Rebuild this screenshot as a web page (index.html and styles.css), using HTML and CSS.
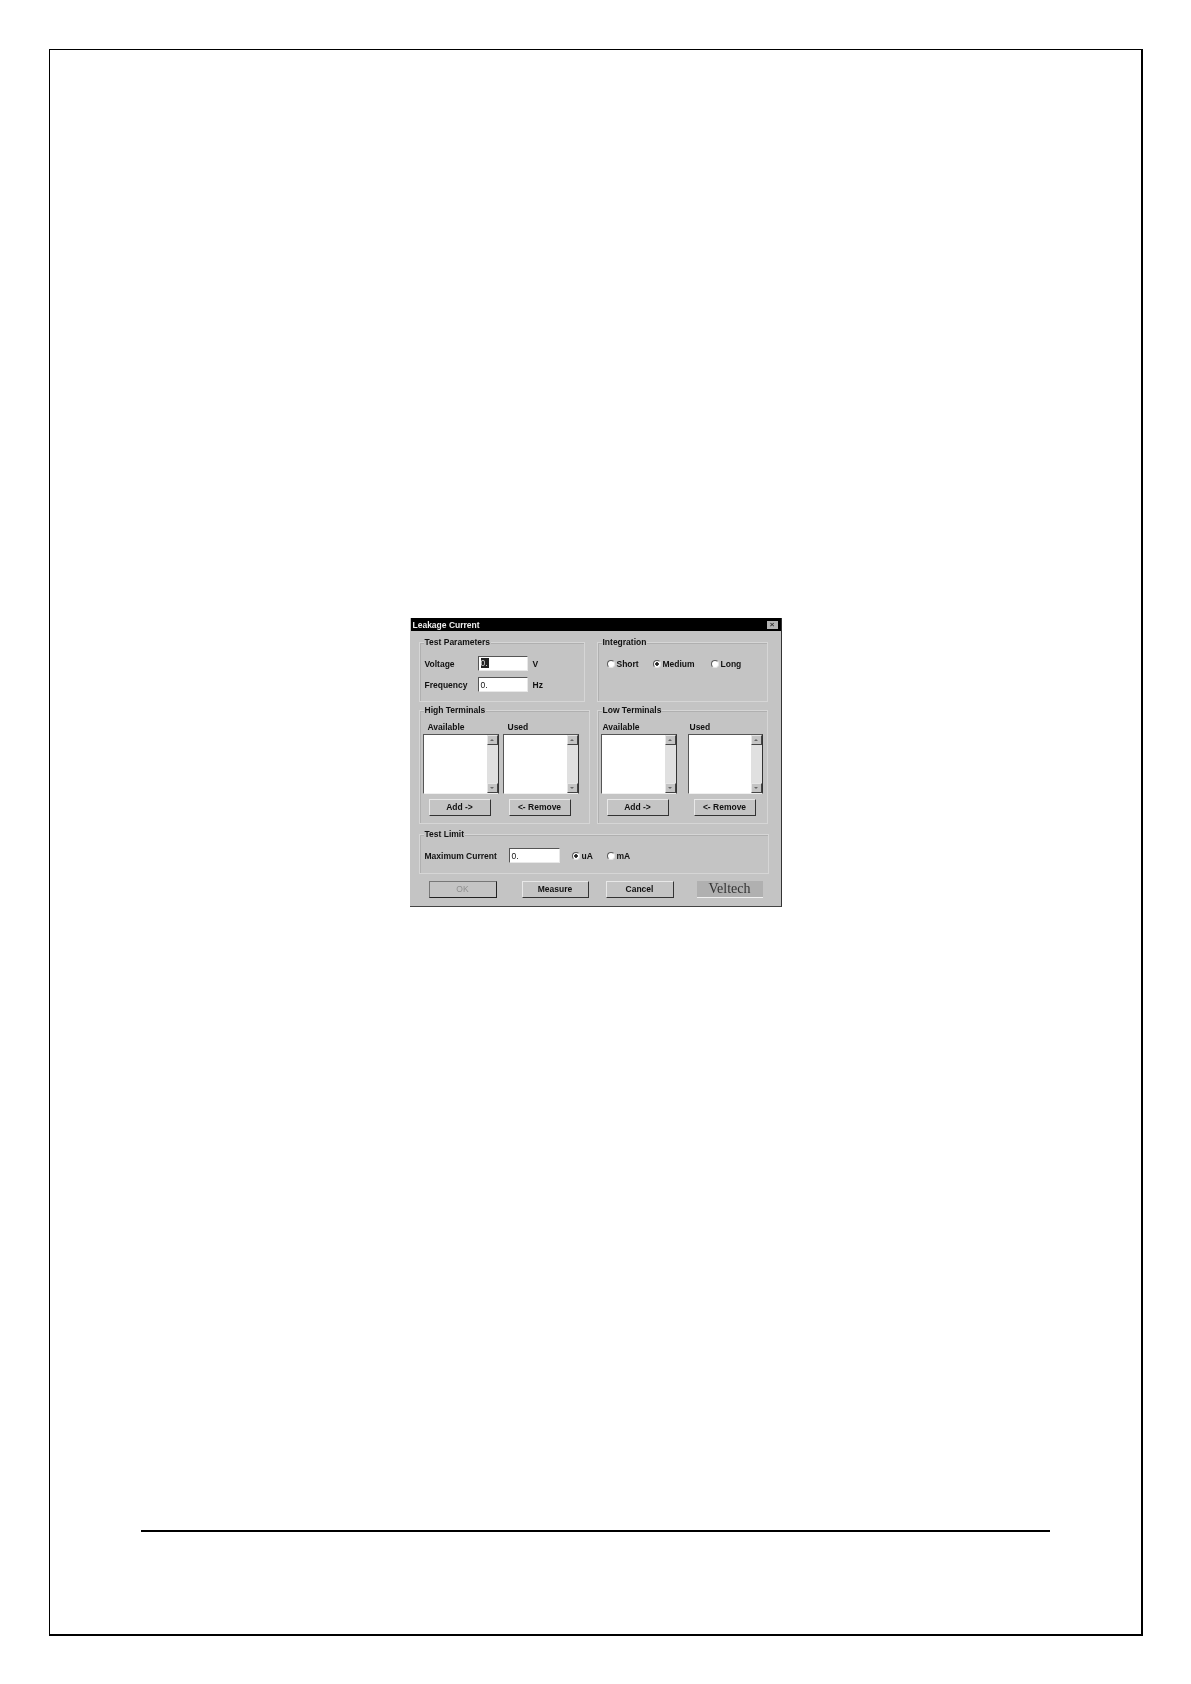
FILE: index.html
```html
<!DOCTYPE html>
<html>
  <head>
    <meta http-equiv="Content-Type" content="text/html; charset=utf-8" />
    <title>Leakage Current</title>
    <link rel="stylesheet" href="styles.css">
  </head>
  <body>
    <div class="page">
      <div class="dialog">
        <div class="titlebar">
          <span class="title">Leakage Current</span>
          <span class="close">×</span>
        </div>

        <div class="row-top">
          <div class="group">
            <div class="legend">Test Parameters</div>
            <div class="params">
              <span>Voltage</span>
              <div class="field"><span class="selected">0.</span></div>
              <span class="unit">V</span>
              <span>Frequency</span>
              <div class="field">0.</div>
              <span class="unit">Hz</span>
            </div>
          </div>
          <div class="group">
            <div class="legend">Integration</div>
            <div class="integration">
              <div class="option"><i class="radio"></i>Short</div>
              <div class="option"><i class="radio checked"></i>Medium</div>
              <div class="option"><i class="radio"></i>Long</div>
            </div>
          </div>
        </div>

        <div class="row-terminals">
          <div class="group">
            <div class="legend">High Terminals</div>
            <div class="terminals high">
              <div class="pane">
                <div class="heading">Available</div>
                <div class="listbox">
                  <div class="list"></div>
                  <div class="scrollbar">
                    <div class="arrow up"></div>
                    <div class="track"></div>
                    <div class="arrow down"></div>
                  </div>
                </div>
                <div class="btn small">Add -&gt;</div>
              </div>
              <div class="pane">
                <div class="heading">Used</div>
                <div class="listbox">
                  <div class="list"></div>
                  <div class="scrollbar">
                    <div class="arrow up"></div>
                    <div class="track"></div>
                    <div class="arrow down"></div>
                  </div>
                </div>
                <div class="btn small">&lt;- Remove</div>
              </div>
            </div>
          </div>
          <div class="group">
            <div class="legend">Low Terminals</div>
            <div class="terminals low">
              <div class="pane">
                <div class="heading">Available</div>
                <div class="listbox">
                  <div class="list"></div>
                  <div class="scrollbar">
                    <div class="arrow up"></div>
                    <div class="track"></div>
                    <div class="arrow down"></div>
                  </div>
                </div>
                <div class="btn small">Add -&gt;</div>
              </div>
              <div class="pane">
                <div class="heading">Used</div>
                <div class="listbox">
                  <div class="list"></div>
                  <div class="scrollbar">
                    <div class="arrow up"></div>
                    <div class="track"></div>
                    <div class="arrow down"></div>
                  </div>
                </div>
                <div class="btn small">&lt;- Remove</div>
              </div>
            </div>
          </div>
        </div>

        <div class="group limit">
          <div class="legend">Test Limit</div>
          <div class="limit-row">
            <span>Maximum Current</span>
            <div class="field">0.</div>
            <div class="option"><i class="radio checked"></i>uA</div>
            <div class="option"><i class="radio"></i>mA</div>
          </div>
        </div>

        <div class="actions">
          <div class="btn ok">OK</div>
          <div class="btn measure">Measure</div>
          <div class="btn cancel">Cancel</div>
          <div class="logo">Veltech</div>
        </div>
      </div>

      <hr class="rule" />
    </div>
  </body>
</html>
```

FILE: styles.css
```css
* {
  box-sizing: border-box;
}
html,
body {
  margin: 0;
  padding: 0;
  background: #fff;
}
.page {
  width: 1094px;
  height: 1587px;
  margin: 49px 0 0 49px;
  padding-top: 568px;
  border-style: solid;
  border-color: #000;
  border-width: 1px 2px 2px 1px;
}
.rule {
  height: 2px;
  margin: 623px 91px 0 91px;
  border: 0;
  background: #000;
}

.dialog {
  width: 372px;
  height: 289px;
  margin: 0 auto;
  padding-left: 1px;
  background: #c4c4c4;
  border-right: 1px solid #333;
  border-bottom: 1px solid #444;
  font-family: "Liberation Sans", Arial, sans-serif;
  font-size: 8.5px;
  font-weight: bold;
  line-height: 12px;
  color: #111;
  filter: blur(0.6px);
}
.titlebar {
  display: flex;
  justify-content: space-between;
  align-items: center;
  height: 13px;
  padding: 0 3px 0 2px;
  background: #000;
  color: #eee;
}
.close {
  width: 11px;
  height: 8px;
  background: #b4b4b4;
  color: #333;
  font-size: 8px;
  line-height: 8px;
  text-align: center;
}

.group {
  border: 1px solid #d6d6d6;
  box-shadow: inset 1px 1px 0 #b0b0b0;
}
.legend {
  width: fit-content;
  height: 12px;
  margin: -7px 0 0 4px;
  padding: 0 1px;
  background: #c4c4c4;
}

.row-top {
  display: grid;
  grid-template-columns: 166px 171px;
  column-gap: 12px;
  height: 60px;
  margin: 11px 0 0 8px;
}
.params {
  display: grid;
  grid-template-columns: 53px 50px auto;
  row-gap: 6px;
  align-items: center;
  margin: 8px 0 0 5px;
}
.unit {
  padding-left: 5px;
}
.field {
  height: 15px;
  padding: 1px 0 0 2px;
  background: #fff;
  border: 1px solid;
  border-color: #555 #e8e8e8 #e8e8e8 #555;
  font-weight: normal;
  color: #111;
}
.selected {
  display: block;
  width: 8px;
  height: 10px;
  background: #222;
  color: #ddd;
  line-height: 10px;
}
.integration {
  display: grid;
  grid-template-columns: 46px 58px auto;
  margin: 10px 0 0 9px;
}
.option {
  display: flex;
  align-items: center;
  gap: 2px;
}
.radio {
  width: 8px;
  height: 8px;
  border-radius: 50%;
  border: 1px solid;
  border-color: #5a5a5a #e4e4e4 #e4e4e4 #5a5a5a;
  background: #fff;
}
.radio.checked {
  background: radial-gradient(circle, #222 0 1.5px, #fff 2px);
}

.row-terminals {
  display: grid;
  grid-template-columns: 171px 171px;
  column-gap: 7px;
  height: 114px;
  margin: 8px 0 0 8px;
}
.terminals {
  display: grid;
  margin: 5px 0 0 3px;
}
.terminals.high {
  grid-template-columns: 76px 76px;
  column-gap: 4px;
}
.terminals.low {
  grid-template-columns: 76px 75px;
  column-gap: 11px;
}
.high .heading {
  padding-left: 5px;
}
.low .heading {
  padding-left: 2px;
}
.listbox {
  display: flex;
  height: 60px;
  margin-top: 1px;
  border: 1px solid;
  border-color: #555 #333 #f0f0f0 #555;
  background: #fff;
}
.list {
  flex: 1;
}
.scrollbar {
  display: flex;
  flex-direction: column;
  width: 11px;
}
.track {
  flex: 1;
  background: #e0e0e0;
}
.arrow {
  display: flex;
  align-items: center;
  justify-content: center;
  height: 10px;
  background: #c4c4c4;
  border: 1px solid;
  border-color: #e6e6e6 #444 #444 #e6e6e6;
}
.arrow::before {
  content: "";
  border-left: 2px solid transparent;
  border-right: 2px solid transparent;
}
.arrow.up::before {
  border-bottom: 2px solid #666;
}
.arrow.down::before {
  border-top: 2px solid #666;
}

.btn {
  height: 17px;
  background: #c4c4c4;
  border: 1px solid;
  border-color: #e8e8e8 #333 #333 #e8e8e8;
  line-height: 15px;
  text-align: center;
}
.btn.small {
  width: 62px;
  margin: 5px 0 0 6px;
}

.limit {
  width: 350px;
  height: 40px;
  margin: 10px 0 0 8px;
}
.limit-row {
  display: grid;
  grid-template-columns: 84px 51px 47px auto;
  align-items: center;
  margin: 8px 0 0 5px;
}
.limit-row .option:nth-child(3) {
  margin-left: 12px;
}

.actions {
  display: flex;
  margin: 7px 0 0 18px;
}
.ok {
  width: 68px;
  color: #8f8f8f;
  font-weight: normal;
  border-color: #777 #222 #222 #777;
}
.measure {
  width: 67px;
  margin-left: 25px;
}
.cancel {
  width: 68px;
  margin-left: 17px;
}
.logo {
  width: 66px;
  height: 17px;
  margin-left: 23px;
  background: #b0b0b0;
  border-bottom: 1px solid #f0f0f0;
  font-family: "Liberation Serif", "Times New Roman", serif;
  font-size: 14px;
  font-weight: normal;
  line-height: 16px;
  text-align: center;
  color: #333;
}
```
